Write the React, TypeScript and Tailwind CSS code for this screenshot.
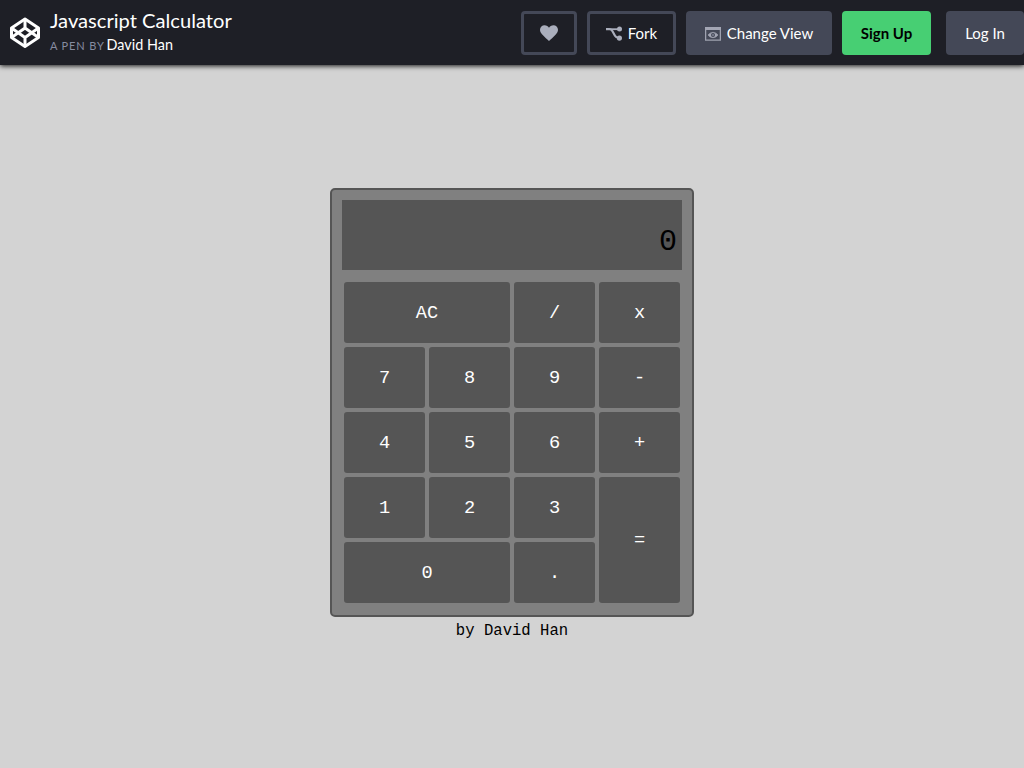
import React from "react";

const keys = [
  { label: "AC", span: "col-span-2" },
  { label: "/", span: "" },
  { label: "x", span: "" },
  { label: "7", span: "" },
  { label: "8", span: "" },
  { label: "9", span: "" },
  { label: "-", span: "" },
  { label: "4", span: "" },
  { label: "5", span: "" },
  { label: "6", span: "" },
  { label: "+", span: "" },
  { label: "1", span: "" },
  { label: "2", span: "" },
  { label: "3", span: "" },
  { label: "=", span: "row-span-2" },
  { label: "0", span: "col-span-2" },
  { label: ".", span: "" },
];

function Logo() {
  return (
    <svg className="h-[32px] w-[30px] shrink-0" viewBox="0 0 30 32" fill="none" stroke="#fff" strokeWidth="3" strokeLinejoin="round">
      <path d="M15 2 28.5 11v9.500L15 29.500 1.500 20.500V11Z" />
      <path d="M15 2v9M15 20.500v9M1.500 11 15 20.500 28.500 11M1.500 20.500 15 11l13.500 9.500" />
    </svg>
  );
}

function Heart() {
  return (
    <svg className="h-4 w-[18px]" viewBox="0 0 18 16" fill="#aaaebc">
      <path d="M9 16C7.6 14.6 4.5 12.100 2 9.300.6 7.700 0 6.300 0 4.800 0 2.200 2.100.3 4.600.3 6.500.3 8.200 1.300 9 2.800 9.800 1.300 11.500.3 13.400.3 15.900.3 18 2.200 18 4.800c0 1.500-.6 2.900-2 4.500C13.500 12.100 10.400 14.600 9 16Z" />
    </svg>
  );
}

function Fork() {
  return (
    <svg className="h-[15px] w-4" viewBox="0 0 16 15" fill="none" stroke="#aaaebc" strokeWidth="2.200">
      <path d="M0 3.200H3.500C5.200 3.200 5.800 4 6.500 5.200L9 9.800C9.800 11.200 10.500 12 13 12" />
      <path d="M4 3.200H13" strokeWidth="1.800" />
      <circle cx="13.500" cy="3.100" r="2.500" fill="#aaaebc" stroke="none" />
      <circle cx="13.400" cy="12.100" r="2.600" fill="#aaaebc" stroke="none" />
    </svg>
  );
}

function ViewIcon() {
  return (
    <svg className="mt-px h-[14px] w-4" viewBox="0 0 16 14" fill="none" stroke="#9fa2b0">
      <path d="M0 1.500h16" strokeWidth="3" stroke="#a3a6b4" />
      <path d="M.6 3v10.200h14.800V3" strokeWidth="1.300" />
      <path d="M3.200 8C5.500 4.500 10.500 4.500 12.800 8 10.500 11.500 5.500 11.500 3.200 8Z" fill="#a3a6b4" strokeWidth=".8" />
      <circle cx="8" cy="8" r="2" fill="#444857" stroke="none" />
      <circle cx="8" cy="8" r="1" fill="#7c8090" stroke="none" />
    </svg>
  );
}

export default function App() {
  return (
    <div className="flex h-[768px] w-[1024px] flex-col overflow-hidden bg-[#d3d3d3] font-['Lato',sans-serif]">
      <header className="flex h-[65px] shrink-0 items-start bg-[#1e1f26] pl-[10px] shadow-[0_1px_5px_rgba(0,0,0,0.9)]">
        <div className="pt-[17px]">
          <Logo />
        </div>
        <div className="ml-[10px] pt-[8px] whitespace-nowrap">
          <h1 className="text-[20.15px] leading-6 text-white">Javascript Calculator</h1>
          <p className="mt-[3px] text-[14.4px] leading-5 text-white">
            <span className="mr-[2px] text-[11px] tracking-[0.85px] text-[#868ca0]">A PEN BY</span>
            <span>David Han</span>
          </p>
        </div>
        <div className="mt-[11px] ml-auto flex text-[15px] whitespace-nowrap text-white">
          <button aria-label="Love" className="flex h-11 w-14 items-center justify-center rounded border-3 border-[#444857]">
            <Heart />
          </button>
          <button className="ml-[10px] flex h-11 w-[89px] items-center justify-center gap-[6px] rounded border-3 border-[#444857]">
            <Fork />
            Fork
          </button>
          <button className="ml-[10px] flex h-11 w-[146px] items-center justify-center gap-[6px] rounded bg-[#444857]">
            <ViewIcon />
            Change View
          </button>
          <button className="ml-[10px] h-11 w-[89px] rounded bg-[#47cf73] font-bold text-black">Sign Up</button>
          <button className="ml-[15px] h-11 w-[78px] rounded bg-[#444857]">Log In</button>
        </div>
      </header>
      <main className="flex flex-col items-center pt-[123px] font-['Liberation_Mono',monospace]">
        <section className="h-[429px] w-[364px] rounded-[5px] border-2 border-[#555] bg-[gray] p-[10px]">
          <div className="h-[70px] bg-[#555] pt-[23px] pr-[5px] text-right text-[30px] leading-[38px] text-black">0</div>
          <div className="mx-[2px] mt-3 grid auto-rows-[61px] grid-cols-4 gap-1">
            {keys.map((key) => (
              <button key={key.label} className={`rounded-[3px] bg-[#555] text-[18.67px] text-white ${key.span}`}>
                {key.label}
              </button>
            ))}
          </div>
        </section>
        <p className="mt-[5px] text-[15.6px] leading-[18px] text-black">by David Han</p>
      </main>
    </div>
  );
}
